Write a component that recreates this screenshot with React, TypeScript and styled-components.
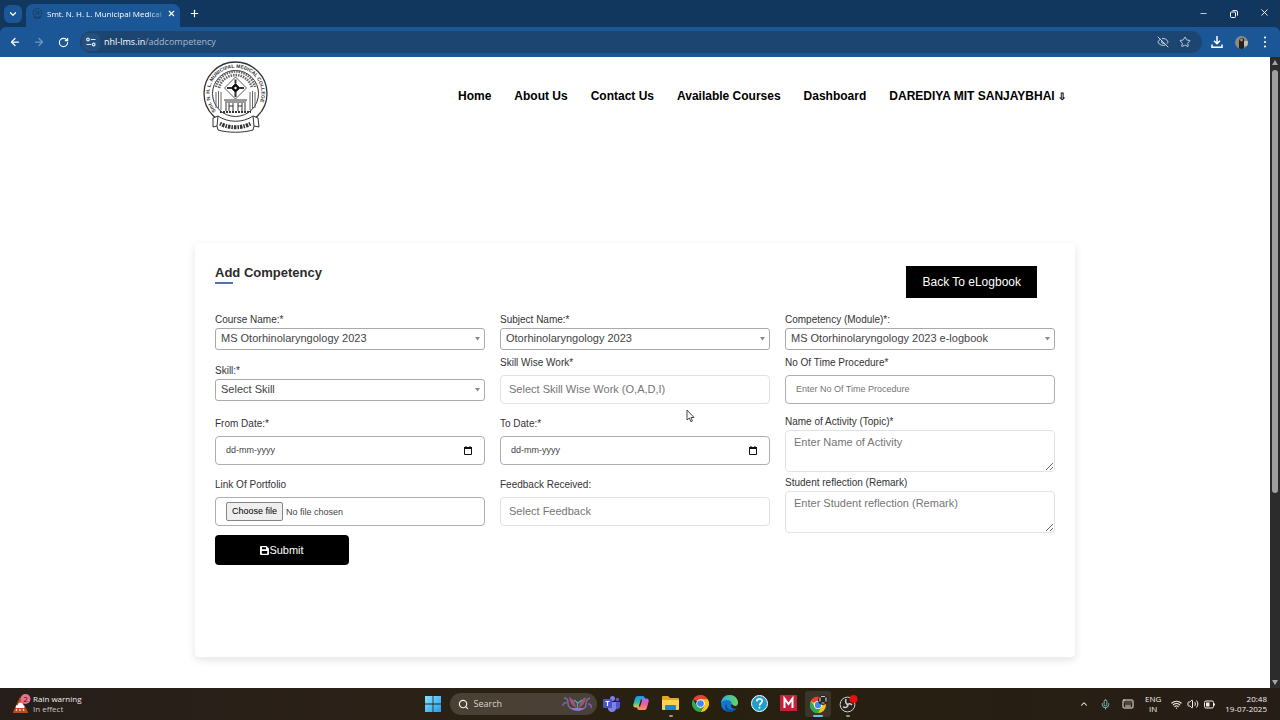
import React from 'react';
import styled, { createGlobalStyle, css } from 'styled-components';
import {
  ArrowLeft, ArrowRight, RotateCw, ChevronDown, ChevronUp, X, Plus, Minus, Star, EyeOff, Mic, Keyboard,
  Wifi, Volume2, Search,
} from 'lucide-react';

const GlobalStyle = createGlobalStyle`
  *, *::before, *::after { box-sizing: border-box; }
  body { margin: 0; background: #fff; font-family: "Liberation Sans", Arial, sans-serif; }
  button, input, select, textarea { font: inherit; color: inherit; margin: 0; }
`;

const Screen = styled.div`
  min-height: 100vh;
  display: flex;
  flex-direction: column;
`;

/* ---------- browser frame ---------- */

const BrowserBar = styled.header`
  background: #12375f;
  color: #fff;
  font-family: "Open Sans", "Noto Sans", sans-serif;
`;

const TabStrip = styled.div`
  height: 27px;
  display: flex;
  align-items: center;
  padding: 0 8px 0 4px;
`;

const IconButton = styled.button<{ $size?: number; $tone?: string; $bg?: string }>`
  width: ${(p) => p.$size ?? 18}px;
  height: ${(p) => p.$size ?? 18}px;
  padding: 0;
  border: 0;
  border-radius: 6px;
  background: ${(p) => p.$bg ?? 'transparent'};
  color: ${(p) => p.$tone ?? '#fff'};
  display: flex;
  align-items: center;
  justify-content: center;
  flex: none;
`;

const Tab = styled.div`
  align-self: stretch;
  width: 154px;
  margin: 4px 5px 0 4px;
  padding: 0 3px 4px 6px;
  display: flex;
  align-items: center;
  gap: 4px;
  background: #1b5796;
  border-radius: 7px 7px 0 0;
  > svg { flex: none; }
`;

const TabTitle = styled.span`
  flex: 1;
  white-space: nowrap;
  font-size: 8px;
  line-height: 14px;
  mask-image: linear-gradient(90deg, #000 88%, rgba(0, 0, 0, 0.3));
`;

const WindowButtons = styled.div`
  margin-left: auto;
  display: flex;
  gap: 13px;
`;

const Toolbar = styled.div`
  height: 30px;
  display: flex;
  align-items: center;
  gap: 6px;
  padding: 0 6px;
  background: #1b5796;
  border-radius: 6px 6px 0 0;
`;

const AddressBar = styled.div`
  flex: 1;
  height: 22px;
  margin-left: 2px;
  padding: 0 8px 0 2px;
  border-radius: 11px;
  background: #1d4571;
  display: flex;
  align-items: center;
  gap: 4px;
`;

const Address = styled.span`
  flex: 1;
  font-size: 9px;
  line-height: 14px;
  color: #a3b8d0;
  b { font-weight: 400; color: #fff; }
`;

const Avatar = styled.span`
  width: 13px;
  height: 13px;
  border-radius: 50%;
  overflow: hidden;
  display: flex;
`;

const Viewport = styled.div`
  flex: 1;
  display: flex;
`;

const ScrollTrack = styled.div`
  width: 10px;
  flex: none;
  background: #2c2c2c;
  display: flex;
  flex-direction: column;
  align-items: center;
  gap: 5px;
  padding: 3px 0;
`;

const ScrollThumb = styled.div`
  width: 6px;
  flex: 0 0 423px;
  margin-bottom: auto;
  border-radius: 3px;
  background: #9f9f9f;
`;

/* ---------- web page ---------- */

const Page = styled.div`
  flex: 1;
  display: flex;
  flex-direction: column;
`;

const SiteHeader = styled.div`
  width: 100%;
  max-width: 880px;
  min-height: 78px;
  margin: 0 auto;
  padding: 0 9px 0 8px;
  display: flex;
  align-items: center;
  justify-content: space-between;
`;

const Nav = styled.nav`
  display: flex;
  gap: 23px;
  font-size: 12px;
  line-height: 16px;
  font-weight: 700;
  a { color: #000; text-decoration: none; white-space: nowrap; }
`;

const MenuArrow = styled.span`
  font-size: 10px;
  line-height: 12px;
`;

const Card = styled.main`
  width: 100%;
  max-width: 880px;
  min-height: 414px;
  margin: 108px auto 31px;
  padding: 23px 20px;
  border-radius: 4px;
  background: #fff;
  box-shadow: 0 3px 8px rgba(0, 0, 0, 0.11);
`;

const CardHead = styled.div`
  display: flex;
  justify-content: space-between;
  align-items: flex-start;
  margin-bottom: 15px;
  padding-right: 18px;
`;

const Title = styled.h1`
  margin: 0;
  font-size: 13px;
  line-height: 14px;
  color: #2b2b2b;
  &::after {
    content: "";
    display: block;
    width: 18px;
    height: 2px;
    margin-top: 2px;
    background: #4f6fc0;
  }
`;

const BackLink = styled.a`
  padding: 8px 16px;
  background: #000;
  color: #fff;
  font-size: 12px;
  line-height: 16px;
  text-decoration: none;
`;

const FormGrid = styled.form`
  display: grid;
  grid-template-columns: repeat(3, 1fr);
  grid-template-rows: minmax(43px, auto) minmax(59px, auto) minmax(61px, auto) minmax(59px, auto) auto;
  column-gap: 15px;
  color: #444;
`;

const Field = styled.div<{ $drop?: number; $gap?: number }>`
  display: flex;
  flex-direction: column;
  gap: ${(p) => p.$gap ?? 1}px;
  padding-top: ${(p) => p.$drop ?? 0}px;
`;

const Label = styled.label`
  font-size: 10px;
  line-height: 14px;
  color: #333;
`;

const SelectWrap = styled.div`
  display: grid;
  align-items: center;
  > * { grid-area: 1 / 1; }
  svg { justify-self: end; margin-right: 5px; pointer-events: none; }
`;

const Select = styled.select`
  width: 100%;
  height: 22px;
  padding: 0 20px 2px 5px;
  appearance: none;
  border: 1px solid #aaa;
  border-radius: 3px;
  background: #fff;
  font-size: 11px;
  color: #444;
`;

const box = css<{ $soft?: boolean }>`
  width: 100%;
  border: 1px solid ${(p) => (p.$soft ? '#dfe2e6' : '#aeaeae')};
  border-radius: 4px;
  background: #fff;
`;

const TextInput = styled.input<{ $soft?: boolean }>`
  ${box}
  height: 29px;
  padding: 0 ${(p) => (p.$soft ? 8 : 10)}px 2px;
  font-size: ${(p) => (p.$soft ? 11 : 9)}px;
  &::placeholder { color: #757575; opacity: 1; }
`;

const BoxRow = styled.div<{ $soft?: boolean }>`
  ${box}
  height: 29px;
  padding: 0 10px;
  display: flex;
  align-items: center;
  font-size: 9px;
`;

const DateInput = styled.input`
  flex: 1;
  min-width: 0;
  padding: 0 0 2px;
  border: 0;
  background: none;
  &::placeholder { color: #444; opacity: 1; }
`;

const FileInput = styled.input`
  width: 1px;
  height: 1px;
  opacity: 0;
  position: absolute;
`;

const FileButton = styled.label`
  padding: 2px 5px;
  margin-right: 3px;
  border: 1px solid #858585;
  border-radius: 2px;
  background: #efefef;
  color: #000;
  line-height: 13px;
`;

const TextArea = styled.textarea<{ $soft?: boolean }>`
  ${box}
  height: 42px;
  padding: 4px 8px;
  font-size: 11px;
  line-height: 14px;
  resize: vertical;
  display: block;
  &::placeholder { color: #757575; opacity: 1; }
`;

const SubmitButton = styled.button`
  width: 134px;
  height: 30px;
  padding: 0;
  border: 0;
  border-radius: 4px;
  background: #000;
  color: #fff;
  font-size: 11px;
  display: flex;
  align-items: center;
  justify-content: center;
`;

const Pointer = styled.svg`
  position: absolute;
  left: 686px;
  top: 409px;
  pointer-events: none;
`;

/* ---------- taskbar ---------- */

const Taskbar = styled.footer`
  height: 32px;
  display: flex;
  align-items: center;
  background: linear-gradient(90deg, #261e1a, #2b2117 30%, #28200f 55%, #261d17);
  color: #f2efec;
  font-family: "Open Sans", "Noto Sans", sans-serif;
  font-size: 8px;
  line-height: 10px;
`;

const Weather = styled.div`
  flex: 1 1 0;
  display: flex;
  align-items: center;
  gap: 2px;
  padding-left: 12px;
  p { margin: 0; }
  p + p { color: #c9c2bc; }
`;

const Launcher = styled.div`
  display: flex;
  align-items: center;
  padding-left: 6px;
`;

const SearchBox = styled.label`
  width: 147px;
  height: 22px;
  margin: 0 2px 0 8px;
  padding: 0 4px 0 8px;
  border-radius: 11px;
  background: #4a4136;
  display: flex;
  align-items: center;
  gap: 5px;
  input {
    flex: 1;
    min-width: 0;
    padding: 0;
    border: 0;
    background: none;
    font-size: 9px;
  }
  input::placeholder { color: #d8d2ca; opacity: 1; }
`;

const Apps = styled.div`
  width: 262px;
  display: flex;
  justify-content: space-between;
`;

const AppButton = styled.button<{ $active?: boolean; $open?: boolean }>`
  width: 26px;
  height: 26px;
  padding: 4px 0 0;
  border: 0;
  border-radius: 3px;
  background: ${(p) => (p.$active ? '#3b342b' : 'transparent')};
  display: flex;
  flex-direction: column;
  align-items: center;
  justify-content: space-between;
  &::after {
    content: "";
    width: ${(p) => (p.$active ? 10 : 4)}px;
    height: 2px;
    border-radius: 1px;
    background: ${(p) => (p.$active ? '#63c5ea' : p.$open ? '#9b958c' : 'transparent')};
  }
`;

const Tray = styled.div`
  flex: 1 1 0;
  display: flex;
  align-items: center;
  justify-content: flex-end;
  padding-right: 13px;
`;

const TrayIcons = styled.div<{ $gap: number }>`
  display: flex;
  align-items: center;
  gap: ${(p) => p.$gap}px;
`;

const TrayText = styled.div<{ $align: string; $left: number; $right: number }>`
  margin: 0 ${(p) => p.$right}px 0 ${(p) => p.$left}px;
  text-align: ${(p) => p.$align};
  p { margin: 0; }
`;

/* ---------- drawings ---------- */

const Emblem = () => (
  <svg width="66" height="74" viewBox="0 -2 66 74" role="img" aria-label="College emblem" fill="none" stroke="#333">
    <circle cx="32.500" cy="32.500" r="31.500" strokeWidth="1.300" />
    <circle cx="32.500" cy="32.500" r="23" strokeWidth="1" />
    <path id="ring" d="M13 50A26 26 0 1 1 52 50" stroke="none" />
    <text fontSize="5" fontWeight="700" fill="#333" stroke="none" fontFamily="Liberation Sans">
      <textPath href="#ring">Smt. N. H. L. MUNICIPAL MEDICAL COLLEGE</textPath>
    </text>
    <path d="M13 26a20 20 0 0 1 39 0M16 27a17 17 0 0 1 33 0" strokeWidth="2.600" strokeDasharray="1.500 1" stroke="#666" />
    <path d="M32.500 16l11 11-11 11-11-11z" fill="#fff" strokeWidth=".8" />
    <path d="M32.500 18.500v4M32.500 31v5M24 27h4M37 27h4" strokeWidth="2" />
    <path d="M32.500 22.500l4.500 4.500-4.500 4.500-4.500-4.500z" fill="#111" />
    <circle cx="32.500" cy="27" r="1.200" fill="#fff" stroke="none" />
    <path d="M13 31v16M15.500 30v18M18 31v18M47 31v18M49.500 30v18M52 31v16" strokeWidth="1" stroke="#666" />
    <path d="M21 39h23M22 41h21M23 42v8M26 42v8M30 42v8M35 42v8M39 42v8M42 42v8M26 45h4M35 45h4" strokeWidth="1" />
    <path d="M17 51h31" strokeWidth="2" strokeDasharray="2 1" />
    <path d="M10 57l5-2c10 7 25 7 35 0l5 2 1 9-5-1-1 4c-10 3-25 3-35 0l-1-4-4 1z" fill="#fff" strokeWidth="1" />
    <path d="M15 55l-1 10M50 55l1 10" strokeWidth="1" />
    <path d="M17 62.500c9 5 22 5 31 0" strokeWidth="4" strokeDasharray="1.500 1 2.500 1" stroke="#333" />
  </svg>
);

const Caret = () => (
  <svg width="5" height="4" viewBox="0 0 5 4" aria-hidden="true"><path d="M0 0h5L2.500 3.500z" fill="#888" /></svg>
);

const CalendarIcon = () => (
  <svg width="8" height="9" viewBox="0 0 8 9" fill="none" stroke="#111" aria-hidden="true">
    <path d="M.5 1.500h7v7h-7z" /><path d="M0 2h8" strokeWidth="2" /><path d="M2 0v2M6 0v2" />
  </svg>
);

const SaveIcon = () => (
  <svg width="9" height="9" viewBox="0 0 9 9" aria-hidden="true">
    <path fillRule="evenodd" fill="#fff" d="M1 0h5.500L9 2.500V8q0 1-1 1H1Q0 9 0 8V1q0-1 1-1zM2 1.300v2h4v-2zM1.800 5v2.700h5.400V5z" />
  </svg>
);

const ScrollArrow = ({ down = false }: { down?: boolean }) => (
  <svg width="6" height="5" viewBox="0 0 6 5" aria-hidden="true">
    <path d={down ? 'M0 0h6L3 5z' : 'M0 5h6L3 0z'} fill="#a6a6a6" />
  </svg>
);

const TuneIcon = () => (
  <svg width="10" height="10" viewBox="0 0 10 10" fill="none" stroke="#e3ecf5" strokeWidth="1.200" aria-hidden="true">
    <circle cx="2" cy="2.500" r="1.300" /><path d="M4.800 2.500H9.500M.5 7.500h4.700" /><circle cx="7.700" cy="7.500" r="1.300" />
  </svg>
);

const ChromeLogo = () => (
  <svg width="17" height="17" viewBox="0 0 48 48" aria-hidden="true">
    <path d="M24 24L3.200 12A24 24 0 0 1 44.800 12z" fill="#e94235" />
    <path d="M44.800 12A24 24 0 0 1 24 48L34.400 30 24 12z" fill="#fbc116" />
    <path d="M3.200 12A24 24 0 0 0 24 48L34.400 30 13.600 30z" fill="#2da94f" />
    <circle cx="24" cy="24" r="12" fill="#fff" /><circle cx="24" cy="24" r="9.500" fill="#4285f4" />
  </svg>
);

const ChromeProfileLogo = () => (
  <svg width="20" height="18" viewBox="0 0 20 18" aria-hidden="true">
    <g transform="translate(2 2)">
      <circle cx="8" cy="8" r="8" fill="#fbc116" />
      <path d="M8 8L1 4a8 8 0 0 1 14 0z" fill="#e94235" />
      <path d="M1 4a8 8 0 0 0 7 12l3.500-6-7 0z" fill="#2da94f" />
      <circle cx="8" cy="8" r="4" fill="#fff" /><circle cx="8" cy="8" r="3.200" fill="#4285f4" />
    </g>
    <circle cx="15" cy="5" r="5" fill="#282622" />
    <path d="M12 2.500v4M18 2.500v4M13 1.500h4M13.500 8h3" stroke="#c9c6c0" strokeWidth="1.200" fill="none" />
  </svg>
);

const EdgeLogo = () => (
  <svg width="17" height="17" viewBox="0 0 24 24" aria-hidden="true">
    <defs>
      <linearGradient id="edgeTop" x1="0" x2="1"><stop offset="0" stopColor="#35a6ea" /><stop offset="1" stopColor="#63d957" /></linearGradient>
    </defs>
    <circle cx="12" cy="12" r="12" fill="#1476cd" />
    <path d="M0 12C1 4 6 0 12 0c7 0 12 5 12 11 0 4-3 6-6 6-3 0-4-1-4-2 0-1 1-1 1-3 0-3-3-5-7-5-4 0-7 2-8 5z" fill="url(#edgeTop)" />
    <path d="M8 12c-1 7 5 11 14 7-3 4-6 5-10 5-6-1-9-8-4-12z" fill="#0b4f9e" />
    <path d="M14 15c0-1 1-1 1-3 2 4 7 5 9 1v3l-2 3c-4 1-8-1-8-4z" fill="#28221a" />
  </svg>
);

const WindowsLogo = () => (
  <svg width="16" height="16" viewBox="0 0 16 16" aria-hidden="true">
    <defs><linearGradient id="win" x2="1" y2="1"><stop stopColor="#8ae2fb" /><stop offset="1" stopColor="#1e9ff0" /></linearGradient></defs>
    <path d="M0 0h7.600v7.600H0zM8.400 0H16v7.600H8.400zM0 8.400h7.600V16H0zM8.400 8.400H16V16H8.400z" fill="url(#win)" />
  </svg>
);

const TeamsLogo = () => (
  <svg width="17" height="17" viewBox="0 0 17 17" aria-hidden="true">
    <circle cx="9.500" cy="3.500" r="2.500" fill="#7b83eb" /><circle cx="14.500" cy="4.500" r="1.800" fill="#5059c9" />
    <path d="M12 7h5v4a3 3 0 0 1-4 3z" fill="#5059c9" /><path d="M5 7h8v5a4 4 0 0 1-8 2z" fill="#7b83eb" />
    <rect x="0" y="4" width="9" height="9" rx="1" fill="#4b53bc" />
    <path d="M2.500 6.500h4M4.500 6.500v4.500" stroke="#fff" strokeWidth="1.200" />
  </svg>
);

const CopilotLogo = () => (
  <svg width="16" height="16" viewBox="0 0 16 16" aria-hidden="true">
    <defs>
      <linearGradient id="cpA" x2="0" y2="1"><stop stopColor="#1f8ff0" /><stop offset=".6" stopColor="#35c1a0" /><stop offset="1" stopColor="#e8d13b" /></linearGradient>
      <linearGradient id="cpB" x2="0" y2="1"><stop stopColor="#a66cf0" /><stop offset=".5" stopColor="#ef5ba0" /><stop offset="1" stopColor="#fa9a4c" /></linearGradient>
    </defs>
    <path d="M4.500 1H10q1.300 0 1.700 1.500L12 4q-1.800 0-2.300 1.500L7.800 11q-.6 1.500-2 1.500H2.500Q-.5 12.500.5 9L2 3.500Q2.800 1 4.500 1z" fill="url(#cpA)" />
    <path d="M11.500 15H6q-1.300 0-1.700-1.500L4 12q1.800 0 2.300-1.500L8.200 5q.6-1.500 2-1.500h3.300q3 0 2 3.500L14 12.500q-.8 2.500-2.500 2.500z" fill="url(#cpB)" />
    <path d="M8.600 4.500L6.400 11.500" stroke="#28200f" strokeWidth="1.300" />
  </svg>
);

const FolderLogo = () => (
  <svg width="17" height="16" viewBox="0 0 17 16" aria-hidden="true">
    <path d="M0 2q0-1 1-1h5l2 2h8q1 0 1 1v10H0z" fill="#e8a61d" /><path d="M0 5h17v9q0 1-1 1H1q-1 0-1-1z" fill="#fbd34d" />
    <path d="M3 15v-4q0-1 1-1h9q1 0 1 1v4z" fill="#2583cf" />
  </svg>
);

const HelpLogo = () => (
  <svg width="17" height="17" viewBox="0 0 17 17" fill="none" stroke="#fff" aria-hidden="true">
    <circle cx="8.500" cy="8.500" r="8" fill="#1d9fc9" />
    <path d="M5.800 6.500c0-3.600 5.500-3.400 5.500-.4 0 1.900-2.700 2-2.700 4.300" strokeWidth="1.700" /><path d="M8.500 11.800v1.700" strokeWidth="1.700" />
  </svg>
);

const MLogo = () => (
  <svg width="17" height="16" viewBox="0 0 17 16" fill="none" aria-hidden="true">
    <rect width="17" height="16" fill="#c4203c" /><path d="M4.500 13V3.500L8.500 9l4-5.500V13" stroke="#fff" strokeWidth="2" />
  </svg>
);

const ObsLogo = () => (
  <svg width="20" height="18" viewBox="0 0 20 18" fill="none" aria-hidden="true">
    <circle cx="9.500" cy="9.500" r="7.400" fill="#25231f" stroke="#d4d0ca" strokeWidth="1" />
    <path d="M8 4c-1 3 0 5 2 5.500M14 10c-2-2-4-1.500-5 .5M5 12c3 1 5 0 5-2.500" stroke="#d4d0ca" strokeWidth="1.500" />
    <circle cx="15.500" cy="4" r="4" fill="#e60f0f" />
  </svg>
);

const WeatherIcon = () => (
  <svg width="19" height="20" viewBox="0 0 19 20" aria-hidden="true">
    <path d="M8 3L16 18q.5 1-1 1H2q-1.500 0-1-1z" fill="#bb4a19" />
    <path d="M4 14a2 2 0 0 1 2-3 2.500 2.500 0 0 1 5 0 2 2 0 0 1 1 3z" fill="#fff" />
    <path d="M5 15l-1 2M8 15v2M11 15l1 2" stroke="#fff" />
    <circle cx="13.500" cy="5" r="5" fill="#e9738b" />
    <text x="13.500" y="8" fontSize="8" textAnchor="middle" fill="#3b1820">2</text>
  </svg>
);

const SearchArt = () => (
  <svg width="31" height="16" viewBox="0 0 31 16" fill="none" aria-hidden="true">
    <path d="M2 2q4 0 4 5t5 6M5 7q-4-1-4 3M28 2q-4 1-4 6t-5 5M26 8q4 0 3 4" stroke="#7667ad" strokeWidth="1.500" />
    <path d="M7 1q6 2 7 11-6-3-7-11zM24 1q-6 2-7 11 6-3 7-11z" fill="#a3536f" />
    <path d="M12 4l4 3 4-3M15.500 7v6" stroke="#53a6ab" strokeWidth="1.400" /><path d="M9 12h13q-2 3-6.500 3T9 12z" fill="#8b77d0" />
  </svg>
);

const BatteryIcon = () => (
  <svg width="11" height="9" viewBox="0 0 11 9" fill="none" stroke="#f2efec" aria-hidden="true">
    <rect x=".5" y="1" width="9" height="7" rx="1.500" /><path d="M2 2.500h3.500v4H2z" fill="#f2efec" stroke="none" /><path d="M10.500 3.500v2" />
  </svg>
);

const RestoreIcon = () => (
  <svg width="8" height="8" viewBox="0 0 8 8" fill="none" stroke="#fff" aria-hidden="true">
    <rect x=".5" y="2" width="5" height="5.500" rx="1" /><path d="M2.500.6H6q1.500 0 1.500 1.500v3.500" />
  </svg>
);

const DownloadIcon = () => (
  <svg width="12" height="12" viewBox="0 0 12 12" fill="none" stroke="#fff" strokeWidth="1.500" aria-hidden="true">
    <path d="M6 0v7.500M3 4.800l3 3 3-3M1 8.500v2.700h10V8.500" />
  </svg>
);

/* ---------- form parts ---------- */

const SelectField = ({ id, label, value, drop }: { id: string; label: string; value: string; drop?: number }) => (
  <Field $drop={drop}>
    <Label htmlFor={id}>{label}</Label>
    <SelectWrap>
      <Select id={id}><option>{value}</option></Select>
      <Caret />
    </SelectWrap>
  </Field>
);

const DateField = ({ id, label }: { id: string; label: string }) => (
  <Field $drop={2} $gap={5}>
    <Label htmlFor={id}>{label}</Label>
    <BoxRow>
      <DateInput id={id} placeholder="dd-mm-yyyy" inputMode="numeric" />
      <IconButton type="button" $size={13} aria-label="Open calendar"><CalendarIcon /></IconButton>
    </BoxRow>
  </Field>
);

const InputField = ({ id, label, hint, soft, drop }: { id: string; label: string; hint: string; soft?: boolean; drop?: number }) => (
  <Field $gap={5} $drop={drop}>
    <Label htmlFor={id}>{label}</Label>
    <TextInput id={id} placeholder={hint} $soft={soft} />
  </Field>
);

const AreaField = ({ id, label, hint }: { id: string; label: string; hint: string }) => (
  <Field>
    <Label htmlFor={id}>{label}</Label>
    <TextArea id={id} placeholder={hint} $soft />
  </Field>
);

const links = ['Home', 'About Us', 'Contact Us', 'Available Courses', 'Dashboard'];

export default function App() {
  return (
    <Screen>
      <GlobalStyle />
      <BrowserBar>
        <TabStrip>
          <IconButton $bg="#1b5796" aria-label="Search tabs"><ChevronDown size={10} strokeWidth={3} /></IconButton>
          <Tab>
            <svg width="11" height="11" viewBox="0 0 10 10" fill="none" stroke="#173e66" aria-hidden="true">
              <circle cx="5" cy="4.500" r="4" strokeDasharray="2 .6" /><path d="M3 3.500h4M3 5.500h4M2 9h6" />
            </svg>
            <TabTitle>Smt. N. H. L. Municipal Medical</TabTitle>
            <IconButton $size={12} aria-label="Close tab"><X size={9} strokeWidth={3} /></IconButton>
          </Tab>
          <IconButton aria-label="New tab"><Plus size={11} strokeWidth={2.5} /></IconButton>
          <WindowButtons>
            <IconButton aria-label="Minimise"><Minus size={9} /></IconButton>
            <IconButton aria-label="Restore"><RestoreIcon /></IconButton>
            <IconButton $size={16} aria-label="Close"><X size={11} /></IconButton>
          </WindowButtons>
        </TabStrip>
        <Toolbar>
          <IconButton aria-label="Back"><ArrowLeft size={12} strokeWidth={2.5} /></IconButton>
          <IconButton aria-label="Forward" $tone="#7396bb"><ArrowRight size={12} strokeWidth={2.5} /></IconButton>
          <IconButton aria-label="Reload"><RotateCw size={11} strokeWidth={2.5} /></IconButton>
          <AddressBar>
            <IconButton aria-label="Site information" $bg="#24507f"><TuneIcon /></IconButton>
            <Address><b>nhl-lms.in</b>/addcompetency</Address>
            <IconButton $tone="#c3d0de" aria-label="Third-party cookies blocked"><EyeOff size={12} /></IconButton>
            <IconButton $tone="#c3d0de" aria-label="Bookmark"><Star size={12} /></IconButton>
          </AddressBar>
          <IconButton aria-label="Downloads"><DownloadIcon /></IconButton>
          <IconButton aria-label="Profile">
            <Avatar>
              <svg width="13" height="13" viewBox="0 0 13 13" aria-hidden="true">
                <rect width="13" height="13" fill="#8d8a83" /><path d="M4 13V6q0-4 3-4t2 4v7z" fill="#24221f" /><path d="M9 5h4v5H9z" fill="#c5c0b6" />
                <circle cx="6.500" cy="4" r="1.400" fill="#b0927b" />
              </svg>
            </Avatar>
          </IconButton>
          <IconButton aria-label="Menu">
            <svg width="4" height="12" viewBox="0 0 4 12" fill="#fff" aria-hidden="true">
              <circle cx="2" cy="1.500" r="1.100" /><circle cx="2" cy="6" r="1.100" /><circle cx="2" cy="10.500" r="1.100" />
            </svg>
          </IconButton>
        </Toolbar>
      </BrowserBar>

      <Viewport>
        <Page>
          <SiteHeader>
            <Emblem />
            <Nav>
              {links.map((l) => <a key={l} href="#">{l}</a>)}
              <a href="#">DAREDIYA MIT SANJAYBHAI <MenuArrow>⇩</MenuArrow></a>
            </Nav>
          </SiteHeader>
          <Card>
            <CardHead>
              <Title>Add Competency</Title>
              <BackLink href="#">Back To eLogbook</BackLink>
            </CardHead>
            <FormGrid>
              <SelectField id="course" label="Course Name:*" value="MS Otorhinolaryngology 2023" />
              <SelectField id="subject" label="Subject Name:*" value="Otorhinolaryngology 2023" />
              <SelectField id="module" label="Competency (Module)*:" value="MS Otorhinolaryngology 2023 e-logbook" />

              <SelectField id="skill" label="Skill:*" value="Select Skill" drop={8} />
              <InputField id="work" label="Skill Wise Work*" hint="Select Skill Wise Work (O,A,D,I)" soft />
              <InputField id="times" label="No Of Time Procedure*" hint="Enter No Of Time Procedure" />

              <DateField id="from" label="From Date:*" />
              <DateField id="to" label="To Date:*" />
              <AreaField id="activity" label="Name of Activity (Topic)*" hint="Enter Name of Activity" />

              <Field $drop={2} $gap={5}>
                <Label htmlFor="portfolio">Link Of Portfolio</Label>
                <BoxRow>
                  <FileInput id="portfolio" type="file" />
                  <FileButton htmlFor="portfolio">Choose file</FileButton>
                  <span>No file chosen</span>
                </BoxRow>
              </Field>
              <InputField id="feedback" label="Feedback Received:" hint="Select Feedback" soft drop={2} />
              <AreaField id="remark" label="Student reflection (Remark)" hint="Enter Student reflection (Remark)" />

              <SubmitButton type="button"><SaveIcon />Submit</SubmitButton>
            </FormGrid>
          </Card>
        </Page>
        <ScrollTrack>
          <ScrollArrow />
          <ScrollThumb />
          <ScrollArrow down />
        </ScrollTrack>
      </Viewport>

      <Taskbar>
        <Weather>
          <WeatherIcon />
          <div><p>Rain warning</p><p>In effect</p></div>
        </Weather>
        <Launcher>
          <IconButton $size={17} aria-label="Start"><WindowsLogo /></IconButton>
          <SearchBox>
            <Search size={11} strokeWidth={2.5} />
            <input placeholder="Search" aria-label="Search" />
            <SearchArt />
          </SearchBox>
          <Apps>
            <AppButton aria-label="Teams"><TeamsLogo /></AppButton>
            <AppButton aria-label="Copilot"><CopilotLogo /></AppButton>
            <AppButton aria-label="Files" $open><FolderLogo /></AppButton>
            <AppButton aria-label="Chrome"><ChromeLogo /></AppButton>
            <AppButton aria-label="Edge"><EdgeLogo /></AppButton>
            <AppButton aria-label="Help"><HelpLogo /></AppButton>
            <AppButton aria-label="M"><MLogo /></AppButton>
            <AppButton aria-label="Chrome profile" $active><ChromeProfileLogo /></AppButton>
            <AppButton aria-label="Recorder" $open><ObsLogo /></AppButton>
          </Apps>
        </Launcher>
        <Tray>
          <TrayIcons $gap={11}>
            <ChevronUp size={10} strokeWidth={2.5} />
            <Mic size={11} color="#7fc4c9" />
            <Keyboard size={12} />
          </TrayIcons>
          <TrayText $align="center" $left={11} $right={10}><p>ENG</p><p>IN</p></TrayText>
          <TrayIcons $gap={5}>
            <Wifi size={11} strokeWidth={2.5} />
            <Volume2 size={12} />
            <BatteryIcon />
          </TrayIcons>
          <TrayText $align="right" $left={10} $right={0}><p>20:48</p><p>19-07-2025</p></TrayText>
        </Tray>
      </Taskbar>

      <Pointer width="9" height="14" viewBox="0 0 9 14" aria-hidden="true">
        <path d="M1 1v10l2.300-2 1.600 3.700 1.500-.7L4.900 8.500H8z" fill="#fff" stroke="#333" strokeWidth=".9" />
      </Pointer>
    </Screen>
  );
}
